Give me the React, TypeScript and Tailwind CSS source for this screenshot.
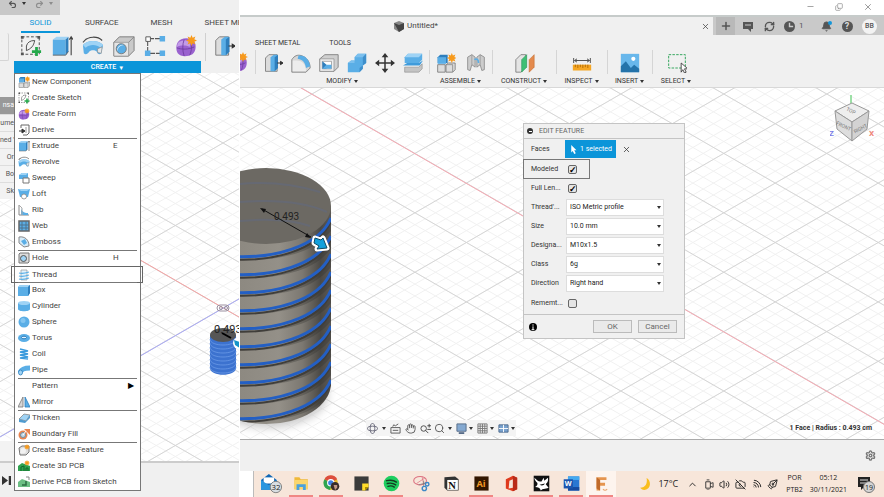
import { Fragment, ReactNode, useState } from 'react';
import {
  Bell,
  CameraOff,
  ChevronUp,
  Copy,
  Hand,
  Minus,
  PenTool,
  Plus,
  Redo2,
  RefreshCw,
  Search,
  Settings,
  Undo2,
  Volume2,
  Wifi,
  X,
} from 'lucide-react';

const BLUE = '#5aaee6';
const LIGHT = '#9fd3f5';
const DARK = '#2f7fbd';

function Svg({ size = 24, box = 24, children }: { size?: number; box?: number; children: ReactNode }) {
  return (
    <svg width={size} height={size} viewBox={`0 0 ${box} ${box}`} fill="none" className="shrink-0" aria-hidden="true">
      {children}
    </svg>
  );
}

function Star({ x, y, r = 5 }: { x: number; y: number; r?: number }) {
  const points = Array.from({ length: 16 }, (_, i) => {
    const radius = i % 2 ? r * 0.55 : r;
    const a = (i * Math.PI) / 8;
    return `${x + radius * Math.sin(a)},${y - radius * Math.cos(a)}`;
  }).join(' ');
  return <polygon points={points} fill="#f79a1c" />;
}

/* Ribbon drawings, 24 x 24 */
const tools: Record<string, ReactNode> = {
  sketch: (
    <>
      <path d="M2 2h19v19H2z" stroke="#444" strokeDasharray="3 2" />
      <path d="M7 17V12c1-4 4-6 9-6-1 6-4 9-9 11z" stroke="#444" />
      <path d="M1 1h3v3H1zM19 1h3v3h-3zM1 19h3v3H1z" fill="#555" />
      <path d="M18 13v10M13 18h10" stroke="#23a84a" strokeWidth="3" />
    </>
  ),
  extrude: (
    <>
      <path d="M2 5l4-3h13l-3 3z" fill={LIGHT} />
      <path d="M2 5h14v17H2z" fill={BLUE} />
      <path d="M16 5l3-3v16l-3 4z" fill={DARK} />
      <path d="M22 22V3M20 5l2-3 2 3" stroke="#444" strokeWidth="1.200" />
      <path d="M2 22h14l3-4" stroke="#666" />
    </>
  ),
  revolve: (
    <>
      <path d="M1 11c5-6 17-6 22 0l-2 9c-2 2-4 1-5-2-2-2-6-2-8 0-2 3-4 4-6 2z" fill={BLUE} />
      <path d="M1 11c5-6 17-6 22 0l-3 3c-4-4-12-4-16 0z" fill={LIGHT} />
      <path d="M2 7C7 1 17 1 22 6M5 4L1 8" stroke="#444" strokeWidth="1.200" />
      <path d="M17 15l5-2-1 7-4-1z" fill="#e8e8e8" stroke="#888" strokeWidth=".7" />
    </>
  ),
  hole: (
    <>
      <path d="M1 8l6-6h16v15l-6 6H1z" fill="#c9c9c9" stroke="#777" />
      <path d="M1 8h16v15H1z" fill="#e5e5e5" stroke="#888" strokeWidth=".7" />
      <path d="M17 8l6-6" stroke="#888" />
      <circle cx="9" cy="15" r="5.500" fill={BLUE} stroke="#777" />
      <path d="M5 18c0-4 3-7 7-7a5.500 5.500 0 0 0-7 7z" fill="#eef7fd" />
    </>
  ),
  pattern: (
    <>
      <path d="M5 4h13M4 6v13M6 20h12" stroke="#555" strokeWidth="1.200" strokeDasharray="6 1" />
      <path d="M2 2h5v5H2z" fill="#fff" stroke="#555" />
      <path d="M17 1h6v6h-6zM1 17h6v6H1zM17 17h6v6h-6z" fill={BLUE} />
    </>
  ),
  form: (
    <>
      <path d="M3 8c3-5 12-6 17-2 4 4 3 12-1 15-5 3-13 3-16-1-2-3-2-9 0-12z" fill="#9a62cf" />
      <path d="M3 9c4-4 11-4 14-1l-1 5c-4-2-10-2-14 0z" fill="#c39be8" />
      <path d="M2 14c5 2 13 2 19-1M10 5c-2 5-2 12 0 18M17 6c2 5 1 12-1 16" stroke="#6c3c9e" strokeWidth=".9" />
      <Star x={18} y={6} r={6} />
    </>
  ),
  press: (
    <>
      <path d="M3 6l4-4h10v20H3z" fill="#dcdcdc" stroke="#777" />
      <path d="M9 5l4-3h4v17l-3 3H9z" fill={BLUE} />
      <path d="M14 5l4-3v16l-4 4z" fill={DARK} />
      <path d="M17 12h6M21 10l3 2-3 2z" stroke="#333" strokeWidth="1.200" fill="#333" />
    </>
  ),
  fillet: (
    <>
      <path d="M1 23V8c3-5 7-6 11-5 7 2 11 8 11 15l-5 5z" fill="#d6d6d6" stroke="#777" />
      <path d="M2 22V9h5c7 0 11 5 11 13z" fill="#ededed" />
      <path d="M9 3c8-1 13 5 14 13l-5 2C17 11 14 8 8 7z" fill={BLUE} />
    </>
  ),
  shell: (
    <>
      <path d="M1 7l6-5h16v15l-5 5H1z" fill="#cfcfcf" stroke="#777" />
      <path d="M1 7h17v15H1z" fill="#eee" stroke="#888" strokeWidth=".8" />
      <path d="M4 10h11v9H4z" fill="#fff" stroke="#888" strokeWidth=".8" />
      <path d="M4 10l5 4v5H4z" fill={DARK} />
      <path d="M4 19l5-5h6v5z" fill={BLUE} />
    </>
  ),
  combine: (
    <>
      <path d="M1 12l4-3h4V5l4-4h10v11l-4 3v4l-4 4H1z" fill={BLUE} />
      <path d="M9 5l4-4h10l-4 4zM1 12l4-3h4v3z" fill="#7cc0ee" />
      <path d="M19 5l4-4v11l-4 3zM15 18l4-3v4l-4 4z" fill="#3f8fcb" />
    </>
  ),
  move: (
    <>
      <path d="M12 3v18M3 12h18" stroke="#333" strokeWidth="1.800" />
      <path d="M12 0l4 5H8zM12 24l4-5H8zM0 12l5-4v8zM24 12l-5-4v8z" fill="#333" />
    </>
  ),
  split: (
    <>
      <path d="M2 5l4-4h17v7l-4 4H2z" fill={BLUE} />
      <path d="M2 5l4-4h17l-4 4z" fill={LIGHT} />
      <path d="M0 15l5-3h14l5-3-4 6H0z" fill="#3f9bdb" />
      <path d="M2 17h17l4-4v6l-4 4H2z" fill="#c4c4c4" stroke="#888" strokeWidth=".7" />
    </>
  ),
  component: (
    <>
      <path d="M2 5l3-3h9v10H2z" fill={DARK} />
      <path d="M2 5h10v8H2z" fill={BLUE} />
      <path d="M2 14h9v9H2zM12 14l3-2h8v8l-3 3h-8z" fill="#ddd" stroke="#777" />
      <path d="M12 14h8v9" stroke="#888" />
      <Star x={19} y={6} r={6} />
    </>
  ),
  joint: (
    <>
      <path d="M2 5l5-3 4 3v12l-4-3-2 7-3-1z" fill="#ccc" stroke="#888" />
      <path d="M22 5l-5-3-4 3v12l4-3 2 7 3-1z" fill="#ccc" stroke="#888" />
      <path d="M10 8c3-2 5 0 5 4" stroke={BLUE} strokeWidth="2" />
      <path d="M7 2v12M17 2v12" stroke="#999" />
    </>
  ),
  plane: (
    <>
      <path d="M1 8l6-6h6v15l-6 6H1z" fill="#e4e4e4" stroke="#777" />
      <path d="M8 8l6-6v15l-6 6z" fill="#3fbf74" stroke="#2a9657" strokeWidth=".7" />
      <path d="M17 8l6-6v15l-6 6z" fill="#e48a4d" stroke="#c36c31" strokeWidth=".7" />
    </>
  ),
  measure: (
    <>
      <path d="M2 6v6M22 6v6M3 9h18M6 7L3 9l3 2M18 7l3 2-3 2" stroke="#555" strokeWidth="1.200" />
      <path d="M1 14h22v7H1z" fill="#f5a623" />
      <path d="M4 14v3M7 14v4M10 14v3M13 14v4M16 14v3M19 14v4" stroke="#a86503" />
    </>
  ),
  insert: (
    <>
      <path d="M1 1h22v22H1z" fill="#68b7eb" />
      <circle cx="16" cy="7" r="2.500" fill="#fff" />
      <path d="M1 16l6-6 6 8 4-4 6 5v4H1z" fill="#2473aa" />
    </>
  ),
  select: (
    <>
      <path d="M2 2h20v16H2z" stroke="#38a860" strokeWidth="1.200" strokeDasharray="3 1.500" />
      <path d="M17 12v11l2-3 2 4 2-1-2-4h4z" fill="#fff" stroke="#333" />
    </>
  ),
};

const cube = (
  <>
    <path d="M0 3l2-2h10v8l-2 3H0z" fill={BLUE} />
    <path d="M0 3l2-2h10l-2 2z" fill={LIGHT} />
    <path d="M10 3l2-2v8l-2 3z" fill={DARK} />
  </>
);

/* Menu drawings, 12 x 12 */
const glyphs: Record<string, ReactNode> = {
  derive: (
    <>
      <path d="M3 1h8v8l-2 2H5M3 1v3" stroke="#666" />
      <path d="M1 7h5M4 5l3 2-3 2z" stroke="#333" fill="#333" />
      <path d="M8 3v6" stroke="#999" />
    </>
  ),
  sweep: (
    <>
      <path d="M1 3l3-2h6v6H1z" fill={BLUE} />
      <path d="M1 3l3-2h6L8 3z" fill={LIGHT} />
      <path d="M5 6h6v5H5z" fill="#fff" stroke="#777" />
    </>
  ),
  loft: (
    <>
      <path d="M0 1h12l-2 8H2z" fill={BLUE} />
      <path d="M0 1h12l-3 2H3z" fill={LIGHT} />
      <circle cx="6" cy="8.500" r="2.500" fill="#fff" stroke="#888" strokeWidth=".8" />
    </>
  ),
  rib: (
    <>
      <path d="M1 1v10h10" stroke="#888" />
      <path d="M3 3c0 4 3 6 7 6v2H3z" fill={BLUE} />
      <path d="M1 1l3 3v7" stroke="#aaa" />
    </>
  ),
  web: (
    <>
      <path d="M1 1h10v10H1z" fill={BLUE} stroke="#666" strokeWidth="1.500" />
      <path d="M4 1v10M8 1v10M1 5h10M1 8h10" stroke="#4f738d" />
    </>
  ),
  emboss: (
    <>
      <path d="M1 1c6-1 10 3 10 9l-5 1L1 7z" fill="#d6ebf8" stroke="#888" />
      <path d="M3 5l4-2 2 4-3 2z" fill={BLUE} />
    </>
  ),
  hole: (
    <>
      <path d="M1 2l1-1h9v9l-1 1H1z" fill="#ddd" stroke="#777" />
      <circle cx="5.500" cy="6.500" r="3" fill={LIGHT} stroke="#555" />
    </>
  ),
  thread: (
    <>
      <path d="M3 1h6v10H3z" fill="#e2f2fc" stroke="#999" strokeWidth=".7" />
      <path d="M1 4c3 1 7 0 10-1M1 7c3 1 7 0 10-1M1 10c3 1 7 0 10-1" stroke={BLUE} strokeWidth="1.300" />
    </>
  ),
  box: cube,
  cylinder: (
    <>
      <path d="M0 3v6c0 3 12 3 12 0V3z" fill={BLUE} />
      <ellipse cx="6" cy="3" rx="6" ry="2" fill={LIGHT} />
    </>
  ),
  sphere: (
    <>
      <circle cx="6" cy="6" r="5.500" fill={BLUE} />
      <circle cx="5" cy="4.500" r="2.500" fill="#84c6f1" />
    </>
  ),
  torus: (
    <>
      <ellipse cx="6" cy="6" rx="6" ry="4" fill={BLUE} />
      <ellipse cx="6" cy="5.500" rx="2.500" ry="1.300" fill="#e5f4fd" stroke={DARK} />
    </>
  ),
  coil: <path d="M2 1l8 2-8 1 8 2-8 1 8 2-8 1 8 1" stroke="#3b9bdd" strokeWidth="1.500" />,
  pipe: (
    <>
      <path d="M2 9c1-4 4-5 10-5" stroke={BLUE} strokeWidth="5" />
      <ellipse cx="2.500" cy="8.500" rx="2" ry="2.500" fill={LIGHT} stroke={DARK} strokeWidth=".8" />
    </>
  ),
  mirror: (
    <>
      <path d="M5 1v10H0z" fill="#d6d6d6" stroke="#777" strokeWidth=".8" />
      <path d="M7 1v10h5z" fill={BLUE} stroke={DARK} strokeWidth=".8" />
    </>
  ),
  thicken: (
    <>
      <path d="M1 7l5-5 6 1-4 6z" fill={LIGHT} stroke="#888" strokeWidth=".8" />
      <path d="M1 7v3l6 1 5-5V3L8 9z" fill="#4f9bcf" />
    </>
  ),
  boundary: (
    <>
      <path d="M6 1h6v6z" fill="#e98450" />
      <circle cx="5" cy="7" r="4.500" fill="#e98450" />
      <circle cx="5" cy="7" r="2.500" fill="#c5d9e6" stroke="#6f8ea3" />
      <path d="M5 7l3-4" stroke="#fff" />
    </>
  ),
  base: (
    <>
      <path d="M1 4l3-2h7v6l-3 3H2z" fill="#ddd" stroke="#777" />
      <path d="M3 5c2-2 5-1 5 2s-4 3-6 2" fill="#f2f2f2" />
      <Star x={9} y={3} r={3} />
    </>
  ),
  pcb: (
    <>
      <path d="M0 6l4-3 8 3v5H0z" fill="#2fa24f" />
      <path d="M3 11V7l3-1v5M8 11V8h2v3" stroke="#136a2b" />
      <Star x={9} y={3} r={3} />
    </>
  ),
  derivePcb: (
    <>
      <path d="M0 6l4-3 8 3v5H0z" fill="#6cbf84" />
      <path d="M4 9h4V5" stroke="#2b6f42" strokeWidth="1.500" />
      <path d="M8 1h3v3" stroke="#888" />
    </>
  ),
};

const fromRibbon = ['component', 'sketch', 'form', 'extrude', 'revolve'];

type Item = { label: string; icon?: string; shortcut?: string; submenu?: boolean; marked?: boolean };

const menu: Item[][] = [
  [
    { label: 'New Component', icon: 'component' },
    { label: 'Create Sketch', icon: 'sketch' },
    { label: 'Create Form', icon: 'form' },
    { label: 'Derive', icon: 'derive' },
  ],
  [
    { label: 'Extrude', icon: 'extrude', shortcut: 'E' },
    { label: 'Revolve', icon: 'revolve' },
    { label: 'Sweep', icon: 'sweep' },
    { label: 'Loft', icon: 'loft' },
    { label: 'Rib', icon: 'rib' },
    { label: 'Web', icon: 'web' },
    { label: 'Emboss', icon: 'emboss' },
  ],
  [
    { label: 'Hole', icon: 'hole', shortcut: 'H' },
    { label: 'Thread', icon: 'thread', marked: true },
  ],
  [
    { label: 'Box', icon: 'box' },
    { label: 'Cylinder', icon: 'cylinder' },
    { label: 'Sphere', icon: 'sphere' },
    { label: 'Torus', icon: 'torus' },
    { label: 'Coil', icon: 'coil' },
    { label: 'Pipe', icon: 'pipe' },
  ],
  [
    { label: 'Pattern', submenu: true },
    { label: 'Mirror', icon: 'mirror' },
  ],
  [
    { label: 'Thicken', icon: 'thicken' },
    { label: 'Boundary Fill', icon: 'boundary' },
  ],
  [
    { label: 'Create Base Feature', icon: 'base' },
    { label: 'Create 3D PCB', icon: 'pcb' },
    { label: 'Derive PCB from Sketch', icon: 'derivePcb' },
  ],
];

function MenuIcon({ name }: { name?: string }) {
  if (!name) return <span className="w-3" />;
  if (fromRibbon.includes(name)) return <Svg size={12}>{tools[name]}</Svg>;
  return (
    <Svg size={12} box={12}>
      {glyphs[name]}
    </Svg>
  );
}

function CreateMenu() {
  return (
    <div role="menu" className="absolute top-0 left-3.5 w-[127px] border border-[#777] bg-white">
      {menu.map((group, g) => (
        <div key={g} className="relative">
          {g > 0 && <div className="absolute top-0 right-[3px] left-[3px] border-t border-[#777]" />}
          {group.map((item) => (
            <button
              key={item.label}
              type="button"
              role="menuitem"
              className={
                item.marked
                  ? 'relative -mx-1 flex h-[17px] -mb-px w-[132px] items-center gap-0.5 border border-[#666] px-[6px] text-[8px] text-[#444]'
                  : 'flex h-4 w-full items-center gap-0.5 px-[3px] text-[8px] text-[#444]'
              }
            >
              <MenuIcon name={item.icon} />
              <span>{item.label}</span>
              {item.shortcut && <span className="ml-auto w-6 text-left">{item.shortcut}</span>}
              {item.submenu && <span className="mr-[3px] ml-auto text-[8px] text-black">▶</span>}
            </button>
          ))}
        </div>
      ))}
    </div>
  );
}

/* Isometric ground grid. step is the vertical distance between two main lines. */
function Grid({ x, y, step }: { x: number; y: number; step: number }) {
  const slope = 0.577;
  const lines = Array.from({ length: 201 }, (_, i) => i - 100);
  return (
    <g>
      {[5, 1].map((div) => (
        <g key={div} stroke={div === 5 ? '#f1f1f1' : '#d6d6d6'}>
          {lines.map((k) => {
            const c = y + (k * step) / div;
            return (
              <Fragment key={k}>
                <line x1={-10} y1={c - slope * (x + 10)} x2={1400} y2={c + slope * (1400 - x)} />
                <line x1={-10} y1={c + slope * (x + 10)} x2={1400} y2={c - slope * (1400 - x)} />
              </Fragment>
            );
          })}
        </g>
      ))}
    </g>
  );
}

function Arrow({ x, y }: { x: number; y: number }) {
  return (
    <g transform={`translate(${x} ${y})`} strokeLinejoin="round">
      <path d="M2 1l6 2 2-2 4 10-10 1 2-3-5-3z" fill="#fff" stroke="#fff" strokeWidth="5" />
      <path d="M2 1l6 2 2-2 4 10-10 1 2-3-5-3z" fill="#12a0dc" stroke="#0e4a66" />
    </g>
  );
}

function LeftScene() {
  return (
    <svg className="absolute inset-0 h-full w-full bg-white" aria-hidden="true">
      <Grid x={223} y={235} step={55} />
      <path d="M0 106l239 138" stroke="#f5a3a3" />
      <path d="M0 364l239-138" stroke="#a9a9f5" />
      <g fill="none" stroke="#9a8f9f">
        <rect x="217" y="232" width="12" height="6" rx="3" />
        <circle cx="221" cy="235" r="1.500" />
        <circle cx="226" cy="235" r="1.500" />
      </g>
      <path d="M210 262v33c0 9 26 9 26 0v-33z" fill="#3c72cf" />
      <g fill="none" stroke="#6a99e6" strokeWidth=".8">
        {[0, 1, 2, 3, 4, 5, 6, 7].map((i) => (
          <path key={i} d={`M210 ${266 + i * 4}c0 8 26 8 26 0`} />
        ))}
      </g>
      <ellipse cx="223" cy="262" rx="13" ry="7" fill="#565656" />
      <path d="M222 260l9 5" stroke="#000" strokeWidth="2" />
      <text x="214" y="260" fontSize="11" fill="#222">
        0.493
      </text>
      <circle cx="239" cy="270" r="6" fill="#fff" />
      <path d="M234 267l6 2v6l-5-3z" fill="#1694c8" />
    </svg>
  );
}

function RightScene() {
  const turns = Array.from({ length: 10 }, (_, i) => i * 18);
  return (
    <svg className="absolute inset-0 h-full w-full bg-white" aria-hidden="true">
      <defs>
        <linearGradient id="body" x1="0" x2="1" y1="0" y2="0">
          <stop offset="0" stopColor="#86827a" />
          <stop offset=".6" stopColor="#949088" />
          <stop offset=".78" stopColor="#7c7871" />
          <stop offset=".92" stopColor="#4b4945" />
          <stop offset="1" stopColor="#5c5955" />
        </linearGradient>
        <clipPath id="hull">
          <path d="M-39 118v177a65 41 0 0 0 130 0V118z" />
        </clipPath>
        <filter id="soft" x="-20%" y="-50%" width="140%" height="200%">
          <feGaussianBlur stdDeviation="4" />
        </filter>
      </defs>
      <Grid x={72} y={6} step={59.4} />
      <path d="M61 0l1000 577" stroke="#f5a9b2" />
      <ellipse cx="28" cy="306" rx="60" ry="34" fill="#ccc" filter="url(#soft)" />
      <g clipPath="url(#hull)">
        <path d="M-39 118h130v220H-39z" fill="url(#body)" />
        {turns.map((t) => (
          <g key={t}>
            <path d={`M20 ${172 + t}C52 ${168 + t} 80 ${157 + t} 91 ${130 + t}v13C78 ${158 + t} 62 ${168 + t} 20 ${172 + t}z`} fill="#2f2d2a" opacity=".3" />
            <path d={`M-14 ${171 + t}C32 ${175 + t} 79 ${162 + t} 91 ${133 + t}`} fill="none" stroke="#403e3a" strokeWidth="2" />
            <path d={`M-14 ${168 + t}C32 ${172 + t} 79 ${159 + t} 91 ${130 + t}`} fill="none" stroke="#235fc4" strokeWidth="3" />
          </g>
        ))}
      </g>
      <ellipse cx="26" cy="118" rx="65" ry="38" fill="#6c6963" />
      <g fill="none" stroke="#5f6b88" strokeWidth="2" opacity=".45">
        <path d="M0 96c30-3 57 1 80 8M0 114c40-3 67 1 87 10M0 133c34-3 55 0 70 5" />
      </g>
      <path d="M22 121l49 28" stroke="#111" />
      <path d="M20 120l6 1-2 4zM71 150l-6-1 2-4z" fill="#111" />
      <text x="34" y="132" fontSize="10" fill="#222">
        0.493
      </text>
      <Arrow x={73} y={149} />
    </svg>
  );
}

function ViewCube() {
  return (
    <svg width="50" height="50" viewBox="0 0 50 50" className="absolute top-[6px] right-1" aria-label="View cube">
      <path d="M21 1v9" stroke="#7cd68a" strokeWidth="1.500" />
      <path d="M5 17l17-8 17 8-17 11z" fill="#eee" stroke="#999" />
      <path d="M5 17l17 11v19L7 35z" fill="#ddd" stroke="#999" />
      <path d="M39 17L22 28v19l15-12z" fill="#d3d3d3" stroke="#999" />
      <g fontSize="5" fill="#777">
        <text x="16" y="18" transform="rotate(25 20 17)">TOP</text>
        <text x="6" y="33" transform="rotate(25 12 31)">FRONT</text>
        <text x="23" y="36" transform="rotate(-28 31 34)">RIGHT</text>
      </g>
      <text x="-1" y="42" fontSize="8" fontWeight="bold" fill="#7a7ae6">Z</text>
      <text x="39" y="42" fontSize="8" fontWeight="bold" fill="#ee8276">X</text>
    </svg>
  );
}

const fields = [
  { id: 'type', label: "Thread'...", value: 'ISO Metric profile' },
  { id: 'size', label: 'Size', value: '10.0 mm' },
  { id: 'designation', label: 'Designa...', value: 'M10x1.5' },
  { id: 'class', label: 'Class', value: '6g' },
  { id: 'direction', label: 'Direction', value: 'Right hand' },
];

const checkClass =
  "grid h-[9px] w-[9px] appearance-none place-items-center rounded-xs border border-[#666] bg-[#e4e4e4] text-[9px] leading-none font-bold text-black checked:before:content-['✓']";

function EditFeature() {
  const [modeled, setModeled] = useState(true);
  const [fullLength, setFullLength] = useState(true);
  const [remember, setRemember] = useState(false);

  return (
    <section className="absolute top-[35px] left-[283px] w-[162px] border border-[#c4c4c4] bg-[#f0f0f0] text-[7px] text-[#333]">
      <h2 className="flex h-[15px] items-center gap-[6px] border-b border-[#c4c4c4] px-[3px] text-[#666]">
        <span className="grid h-[6px] w-[6px] place-items-center rounded-full bg-[#333]">
          <span className="h-px w-[3px] bg-white" />
        </span>
        EDIT FEATURE
      </h2>
      <div className="flex h-5 items-center pl-[7px]">
        <span className="w-[34px]">Faces</span>
        <button type="button" className="flex h-[18px] w-[51px] items-center gap-0.5 bg-[#0b95d9] pl-1 whitespace-nowrap text-white">
          <Svg size={9} box={12}>
            <path d="M3 0v10l2-2 2 4 2-1-2-4h3z" fill="#fff" />
          </Svg>
          1 selected
        </button>
        <button type="button" aria-label="Clear faces" className="ml-[6px]">
          <X size={9} />
        </button>
      </div>
      <div className="-ml-px flex h-5 w-[67px] items-center border border-[#777] pl-[7px]">
        <label htmlFor="modeled" className="w-[37px]">
          Modeled
        </label>
        <input id="modeled" type="checkbox" className={checkClass} checked={modeled} onChange={(e) => setModeled(e.target.checked)} />
      </div>
      <div className="flex h-[19px] items-center pl-[7px]">
        <label htmlFor="full" className="w-[37px]">
          Full Len...
        </label>
        <input id="full" type="checkbox" className={checkClass} checked={fullLength} onChange={(e) => setFullLength(e.target.checked)} />
      </div>
      {fields.map((field) => (
        <div key={field.id} className="flex h-[19px] items-center pl-[7px]">
          <label htmlFor={field.id} className="w-[35px]">
            {field.label}
          </label>
          <div className="relative">
            <select id={field.id} className="block h-[17px] w-[98px] appearance-none border border-[#ddd] bg-white px-[3px] text-[7px] text-[#222]">
              <option>{field.value}</option>
            </select>
            <Caret className="pointer-events-none absolute top-[7px] right-[3px]" />
          </div>
        </div>
      ))}
      <div className="flex h-5 items-center pl-[7px]">
        <label htmlFor="remember" className="w-[37px]">
          Rememt...
        </label>
        <input id="remember" type="checkbox" className={checkClass} checked={remember} onChange={(e) => setRemember(e.target.checked)} />
      </div>
      <div className="mt-px flex h-6 items-center gap-[6px] border-t border-[#c4c4c4] pr-[7px] pl-[5px] text-[8px] text-[#666]">
        <span className="mr-auto">
          <Svg size={8} box={12}>
            <circle cx="6" cy="6" r="6" fill="#000" />
            <path d="M6 2v2M6 5v5M4 10h4" stroke="#fff" strokeWidth="1.500" />
          </Svg>
        </span>
        <button type="button" className="h-[13px] w-[39px] border border-[#bbb] bg-[#eaeaea]">
          OK
        </button>
        <button type="button" className="h-[13px] w-[39px] border border-[#bbb] bg-[#eaeaea]">
          Cancel
        </button>
      </div>
    </section>
  );
}

function Caret({ className = '' }: { className?: string }) {
  return (
    <svg width="4" height="3" viewBox="0 0 4 3" className={className} aria-hidden="true">
      <path d="M0 0h4L2 3z" fill="#333" />
    </svg>
  );
}

const ribbon = [
  { label: 'MODIFY', icons: ['press', 'fillet', 'shell', 'combine', 'move', 'split'], width: 'w-[174px]' },
  { label: 'ASSEMBLE', icons: ['component', 'joint'], width: 'w-[63px]' },
  { label: 'CONSTRUCT', icons: ['plane'], width: 'w-[64px]' },
  { label: 'INSPECT', icons: ['measure'], width: 'w-[51px]' },
  { label: 'INSERT', icons: ['insert'], width: 'w-[45px]' },
  { label: 'SELECT', icons: ['select'], width: 'w-[48px]' },
];

function Ribbon() {
  return (
    <div className="h-[53px] border-b border-[#d8d8d8] bg-[#f0f0f0] pt-0.5">
      <nav className="flex h-3 items-center gap-[29px] pl-[15px] text-[7px] text-[#333]">
        <a href="#sheet-metal">SHEET METAL</a>
        <a href="#tools">TOOLS</a>
      </nav>
      <div className="flex h-[38px] pt-px">
        <div className="w-[15px] overflow-hidden pt-0.5">
          <div className="-ml-3">
            <Svg size={20}>{tools.form}</Svg>
          </div>
        </div>
        {ribbon.map((group) => (
          <div key={group.label} className={`${group.width} flex flex-col items-center`}>
            <div className={`flex w-full justify-center border-l border-[#d5d5d5] pt-0.5 ${group.label === 'MODIFY' ? 'gap-[6px]' : 'gap-2'}`}>
              {group.icons.map((icon) => (
                <button key={icon} type="button" aria-label={icon} className="p-px">
                  <Svg size={20}>{tools[icon]}</Svg>
                </button>
              ))}
            </div>
            <button type="button" className="flex items-center gap-0.5 text-[7px] leading-[14px] text-[#333]">
              {group.label}
              <Caret />
            </button>
          </div>
        ))}
      </div>
    </div>
  );
}

function TabBar() {
  return (
    <div className="flex h-5 items-stretch border-t-2 border-[#c6cbca] bg-[#c9c9c9] text-[#555]">
      <div className="flex flex-1 items-center bg-[#f0f0f0] pr-[3px] text-[8px] text-[#444]">
        <span className="mr-auto ml-auto flex items-center gap-0.5 pr-[110px]">
          <Svg size={12} box={12}>
            <path d="M1 3l5-2 5 2v6l-5 3-5-3z" fill="#888" />
            <path d="M1 3l5 2 5-2v6l-5 3z" fill="#444" />
          </Svg>
          Untitled*
        </span>
        <button type="button" aria-label="Close tab">
          <X size={9} />
        </button>
      </div>
      <button type="button" aria-label="New tab" className="ml-[3px] grid w-[19px] place-items-center bg-[#b9b9b9]">
        <Plus size={12} strokeWidth={3} />
      </button>
      <div className="flex w-[149px] shrink-0 items-center justify-between pr-[7px] pl-[7px]">
        <Svg size={12} box={12}>
          <path d="M1 2h10v7H9v3L6 9H1z" fill="#555" />
          <path d="M3 5h6" stroke="#ccc" />
        </Svg>
        <RefreshCw size={11} strokeWidth={3} />
        <span className="flex items-center gap-1 text-[8px]">
          <Svg size={11} box={12}>
            <circle cx="6" cy="6" r="6" fill="#555" />
            <path d="M6 2v4h4" stroke="#ccc" strokeWidth="1.500" />
          </Svg>
          1
        </span>
        <span className="relative ml-2">
          <Bell size={11} fill="#555" />
          <span className="absolute top-0 right-0 h-1 w-1 rounded-full bg-[#1295d8]" />
        </span>
        <span className="grid h-[11px] w-[11px] place-items-center rounded-full bg-[#555] text-[9px] leading-none font-bold text-[#ddd]">?</span>
        <span className="grid h-[15px] w-[15px] place-items-center rounded-full bg-[#f3f3f3] text-[7px] font-medium">BB</span>
      </div>
    </div>
  );
}

function NavBar() {
  return (
    <div className="absolute bottom-[3px] left-[126px] flex h-4 w-[150px] items-center justify-between bg-[#f4f4f4] px-px text-[#555]">
      <span className="flex items-center gap-1">
        <Svg size={11} box={12}>
          <ellipse cx="6" cy="6" rx="5.500" ry="2.500" stroke="#667" />
          <ellipse cx="6" cy="6" rx="2.500" ry="5.500" stroke="#667" />
        </Svg>
        <Caret />
      </span>
      <Svg size={11} box={12}>
        <path d="M1 5h10v6H1zM3 8h6M3 4l1-2 2 1 3-2" stroke="#555" />
      </Svg>
      <Hand size={11} />
      <Svg size={11} box={12}>
        <circle cx="4" cy="6" r="3" stroke="#444" />
        <path d="M6 8l3 3M8 3h4M10 1v4M8 7h4" stroke="#444" />
      </Svg>
      <span className="flex items-center gap-[3px]">
        <Search size={11} />
        <Caret />
      </span>
      <span className="flex items-center gap-0.5">
        <Svg size={11} box={12}>
          <path d="M1 1h10v8H1z" fill="#84a9d1" stroke="#566b88" />
          <path d="M3 11h6" stroke="#566b88" strokeWidth="2" />
        </Svg>
        <Caret />
      </span>
      <span className="flex items-center gap-0.5">
        <Svg size={11} box={12}>
          <path d="M1 1h10v10H1zM1 3.500h10M1 6h10M1 8.500h10M3.500 1v10M6 1v10M8.500 1v10" stroke="#777" />
        </Svg>
        <Caret />
      </span>
      <span className="flex items-center gap-0.5">
        <Svg size={11} box={12}>
          <path d="M1 2h10v8H1z" fill="#79a2cf" stroke="#4f6b8d" />
          <path d="M6 2v8M1 6h10" stroke="#fff" />
        </Svg>
        <Caret />
      </span>
    </div>
  );
}

const apps: { name: string; open?: boolean; active?: boolean; art: ReactNode }[] = [
  {
    name: 'Mail',
    art: (
      <>
        <path d="M0 8l9-7 9 7v11H0z" fill="#1267b4" />
        <path d="M3 5h12v7H3z" fill="#fff" />
        <path d="M0 8l9 6 9-6v11H0z" fill="#2a96df" />
        <circle cx="17" cy="16" r="6.500" fill="#d9dee2" stroke="#777" />
        <text x="12" y="19.500" fontSize="9" fill="#222">32</text>
      </>
    ),
  },
  {
    name: 'Explorer',
    open: true,
    art: (
      <>
        <path d="M2 3h7l2 3h10v14H2z" fill="#f0b93a" />
        <path d="M2 7h19v13H2z" fill="#fbd66d" />
        <path d="M5 21v-8h13v8h-4v-4H9v4z" fill="#4aa1dd" />
      </>
    ),
  },
  {
    name: 'Chrome',
    open: true,
    art: (
      <>
        <circle cx="11" cy="11" r="10" fill="#e7bd2d" />
        <path d="M2 6a10 10 0 0 1 18 0l-9 5z" fill="#dd4d3d" />
        <path d="M2 6a10 10 0 0 0 8 15l2-9z" fill="#2fa451" />
        <circle cx="11" cy="11" r="4.500" fill="#3e82e5" stroke="#fff" strokeWidth="1.500" />
        <circle cx="17" cy="16" r="6" fill="#3a2d2b" />
        <path d="M15 14h5v4l-3 3z" fill="#c29a87" />
      </>
    ),
  },
  {
    name: 'Sticky Notes',
    art: (
      <>
        <path d="M2 2h20v20H2z" fill="#3b3b3b" />
        <path d="M13 12h9v5l-5 5h-4z" fill="#ffdc2b" />
        <path d="M17 17h5l-5 5z" fill="#a98a00" />
      </>
    ),
  },
  {
    name: 'Spotify',
    open: true,
    art: (
      <>
        <circle cx="12" cy="12" r="11" fill="#1fce5f" />
        <path d="M5 8c5-1 10-1 14 2M6 12c4-1 8-1 12 2M7 16c3-1 6-1 9 1" stroke="#153d22" strokeWidth="2" strokeLinecap="round" />
      </>
    ),
  },
  {
    name: 'Snip',
    art: (
      <>
        <ellipse cx="10" cy="8" rx="9" ry="6" stroke="#dc7180" strokeWidth="1.500" />
        <path d="M5 12L17 4M15 13l-2-10" stroke="#dc7180" />
        <path d="M8 14l10-3M15 8v8" stroke="#777" />
        <circle cx="16" cy="19" r="3" stroke="#3d88c7" strokeWidth="2" />
        <circle cx="20" cy="13" r="2.500" stroke="#3d88c7" strokeWidth="2" />
      </>
    ),
  },
  {
    name: 'Notion',
    art: (
      <>
        <path d="M2 3l15-1 5 4v16H6l-4-4z" fill="#333" />
        <path d="M6 7h15v14H6z" fill="#fff" />
        <text x="7.500" y="19.500" fontSize="15" fontWeight="bold" fontFamily="Liberation Serif, serif" fill="#111">N</text>
      </>
    ),
  },
  {
    name: 'Illustrator',
    open: true,
    art: (
      <>
        <path d="M2 2h20v20H2z" fill="#321600" />
        <text x="5" y="17" fontSize="13" fontWeight="bold" fill="#f39a26">Ai</text>
      </>
    ),
  },
  {
    name: 'Office',
    art: (
      <>
        <path d="M4 6l10-5 6 3v16l-6 3-10-4z" fill="#df3a1d" />
        <path d="M9 8l5-2v12l-6 1z" fill="#f7e5d8" />
        <path d="M14 1l6 3v16l-6 3z" fill="#b92b18" />
      </>
    ),
  },
  {
    name: 'Rhino',
    open: true,
    art: (
      <>
        <path d="M1 1h22v22H1z" fill="#111" />
        <path d="M2 4c4 4 6 6 10 5l3-5 1 4 5-4c1 5-1 7-3 9l4 5c-5 2-9 1-11 4-1-4-4-5-8-5 3-2 4-4 3-6-2-2-4-4-4-7z" fill="#fff" />
        <path d="M9 13c3 1 5-1 8-1-2 3-5 4-8 1z" fill="#111" />
      </>
    ),
  },
  {
    name: 'Word',
    open: true,
    art: (
      <>
        <path d="M7 2h16v20H7z" fill="#2a77d2" />
        <path d="M7 2h16v5H7z" fill="#45aaf0" />
        <path d="M7 17h16v5H7z" fill="#164aa0" />
        <path d="M1 6h13v13H1z" fill="#1c56ae" />
        <text x="2.500" y="16" fontSize="10" fontWeight="bold" fill="#fff">W</text>
      </>
    ),
  },
  {
    name: 'Fusion 360',
    open: true,
    active: true,
    art: (
      <>
        <path d="M5 3h14v4h-9v4h7v4h-7v7H5z" fill="#e5954f" />
        <path d="M5 3l5 4v15l-5-3z" fill="#c06a2a" />
        <path d="M14 20c2 2 4 2 6 0" stroke="#e7a56d" strokeWidth="1.500" />
      </>
    ),
  },
];

function Taskbar() {
  return (
    <footer className="flex h-[26px] items-stretch bg-[#f7e6da] font-['Open_Sans',sans-serif] text-[#222]">
      <div className="mr-0.5 w-[14px] border-r border-[#bbb] bg-white" />
      {apps.map((app) => (
        <button
          key={app.name}
          type="button"
          aria-label={app.name}
          className={`grid w-[30px] place-items-center ${app.active ? 'bg-[#fdf4ee]' : ''}`}
        >
          <span className={`grid h-[26px] w-6 place-items-center border-b-2 ${app.open ? 'border-[#f08784]' : 'border-transparent'}`}>
            <Svg size={app.name === 'Mail' ? 21 : 17}>{app.art}</Svg>
          </span>
        </button>
      ))}
      <div className="ml-auto flex items-center">
        <Svg size={13} box={12}>
          <path d="M7 0c4 2 5 10-2 11-2 0-3-1-4-2 5 0 7-4 6-9z" fill="#f9bd1d" />
        </Svg>
        <span className="mr-[9px] ml-[6px] text-[9px]">17°C</span>
        <div className="flex items-center gap-[5px]">
          <ChevronUp size={11} />
          <Svg size={11} box={12}>
            <path d="M3 3h5v7H3zM8 5l3-1v5L8 8M4 1h3M4 12h3" stroke="#333" />
          </Svg>
          <Volume2 size={11} />
          <CameraOff size={11} />
          <Wifi size={11} className="rotate-45" />
          <PenTool size={11} className="rotate-90" />
        </div>
        <div className="ml-2 text-center text-[7px] leading-3">
          <div>POR</div>
          <div>PTB2</div>
        </div>
        <div className="ml-[7px] text-center text-[7px] leading-3">
          <div>05:12</div>
          <div>30/11/2021</div>
        </div>
        <span className="mr-[9px] ml-[10px]">
          <Svg size={18} box={18}>
            <path d="M1 2h12v10H7l-3 3v-3H1z" fill="#222" />
            <path d="M3 5h8M3 8h6" stroke="#ddd" />
            <circle cx="12" cy="12" r="5.500" fill="#d5d5d5" stroke="#777" />
            <text x="8" y="15" fontSize="7" fill="#222">19</text>
          </Svg>
        </span>
      </div>
    </footer>
  );
}

const browserRows = ['nsa', 'ume', "ned '", 'Or', 'Bo', 'Sk'];

function LeftPane() {
  return (
    <aside className="flex w-[239px] shrink-0 flex-col overflow-hidden bg-[#f0f0f0]">
      <div className="flex h-[15px] w-[60px] items-start gap-[5px] bg-[#c8c8c8] pl-2 text-[#555]">
        <Undo2 size={9} strokeWidth={3} />
        <Caret className="mt-0.5" />
        <Redo2 size={9} strokeWidth={3} className="ml-1 opacity-50" />
        <Caret className="mt-0.5 opacity-40" />
      </div>
      <nav className="flex h-[18px] items-stretch pl-[21px] text-[8px] leading-4 whitespace-nowrap text-[#444]">
        <a href="#solid" className="w-[39px] shrink-0 border-b-2 border-[#0b95d9] text-center text-[#0b95d9]">
          SOLID
        </a>
        <a href="#surface" className="ml-[25px] shrink-0">
          SURFACE
        </a>
        <a href="#mesh" className="ml-8 shrink-0">
          MESH
        </a>
        <a href="#sheet" className="ml-8 shrink-0">
          SHEET METAL
        </a>
      </nav>
      <div className="flex h-7 items-start">
        <div className="h-7 w-[9px] rounded-r-xs border-r border-b border-[#d5d5d5]" />
        <div className="flex items-center gap-[9px] pt-0.5 pl-[11px]">
          {['sketch', 'extrude', 'revolve', 'hole', 'pattern', 'form'].map((icon) => (
            <button key={icon} type="button" aria-label={icon}>
              <Svg size={22}>{tools[icon]}</Svg>
            </button>
          ))}
        </div>
        <div className="ml-2 h-7 border-l border-[#d0d0d0] pt-0.5 pl-[7px]">
          <Svg size={22}>{tools.press}</Svg>
        </div>
      </div>
      <button type="button" className="ml-3.5 flex h-3 w-[187px] items-center justify-center gap-0.5 bg-[#0b95d9] text-[7px] font-medium text-white">
        CREATE <span className="text-[6px]">▼</span>
      </button>
      <div className="relative flex flex-1 flex-col">
        <div className="relative flex flex-1 overflow-hidden">
          <LeftScene />
          <div className="relative flex w-3.5 flex-col text-[7px] leading-[17px] text-[#555]">
            <div className="h-6 bg-[#f0f0f0]" />
            {browserRows.map((row, i) => (
              <div
                key={row}
                className={
                  i === 0
                    ? 'overflow-hidden bg-[#999] text-right whitespace-nowrap text-white'
                    : 'overflow-hidden border-t border-[#ddd] bg-[#f2f2f2] text-right leading-4 whitespace-nowrap'
                }
              >
                {row}
              </div>
            ))}
            <div className="mt-auto h-5 bg-[#f3f3f3]" />
          </div>
        </div>
        <div className="flex h-9 items-center border-t-2 border-[#ccc] bg-[#f0f0f0] pl-0.5">
          <Svg size={9} box={12}>
            <path d="M0 0l8 6-8 6zM9 0h3v12H9z" fill="#333" />
          </Svg>
        </div>
        <CreateMenu />
      </div>
    </aside>
  );
}

export default function App() {
  return (
    <div className="flex min-h-screen overflow-hidden bg-white font-[Roboto,sans-serif]">
      <LeftPane />
      <main className="ml-px flex min-w-0 flex-1 flex-col">
        <header className="flex h-[15px] items-center justify-end gap-5 pr-[11px] pb-0.5 text-[#888]">
          <button type="button" aria-label="Minimize">
            <Minus size={9} />
          </button>
          <button type="button" aria-label="Restore">
            <Copy size={8} className="-scale-x-100 rotate-180" />
          </button>
          <button type="button" aria-label="Close">
            <X size={10} />
          </button>
        </header>
        <TabBar />
        <Ribbon />
        <div className="relative flex-1 overflow-hidden">
          <RightScene />
          <ViewCube />
          <EditFeature />
          <NavBar />
          <p className="absolute right-3 bottom-[5px] text-[7px] leading-3 font-bold text-[#333]">1 Face | Radius : 0.493 cm</p>
        </div>
        <div className="flex h-8 items-center justify-end border-t border-[#aaa] bg-[#f0f0f0] pr-2 text-[#777]">
          <button type="button" aria-label="Timeline settings">
            <Settings size={11} strokeWidth={3} />
          </button>
        </div>
        <Taskbar />
      </main>
    </div>
  );
}
